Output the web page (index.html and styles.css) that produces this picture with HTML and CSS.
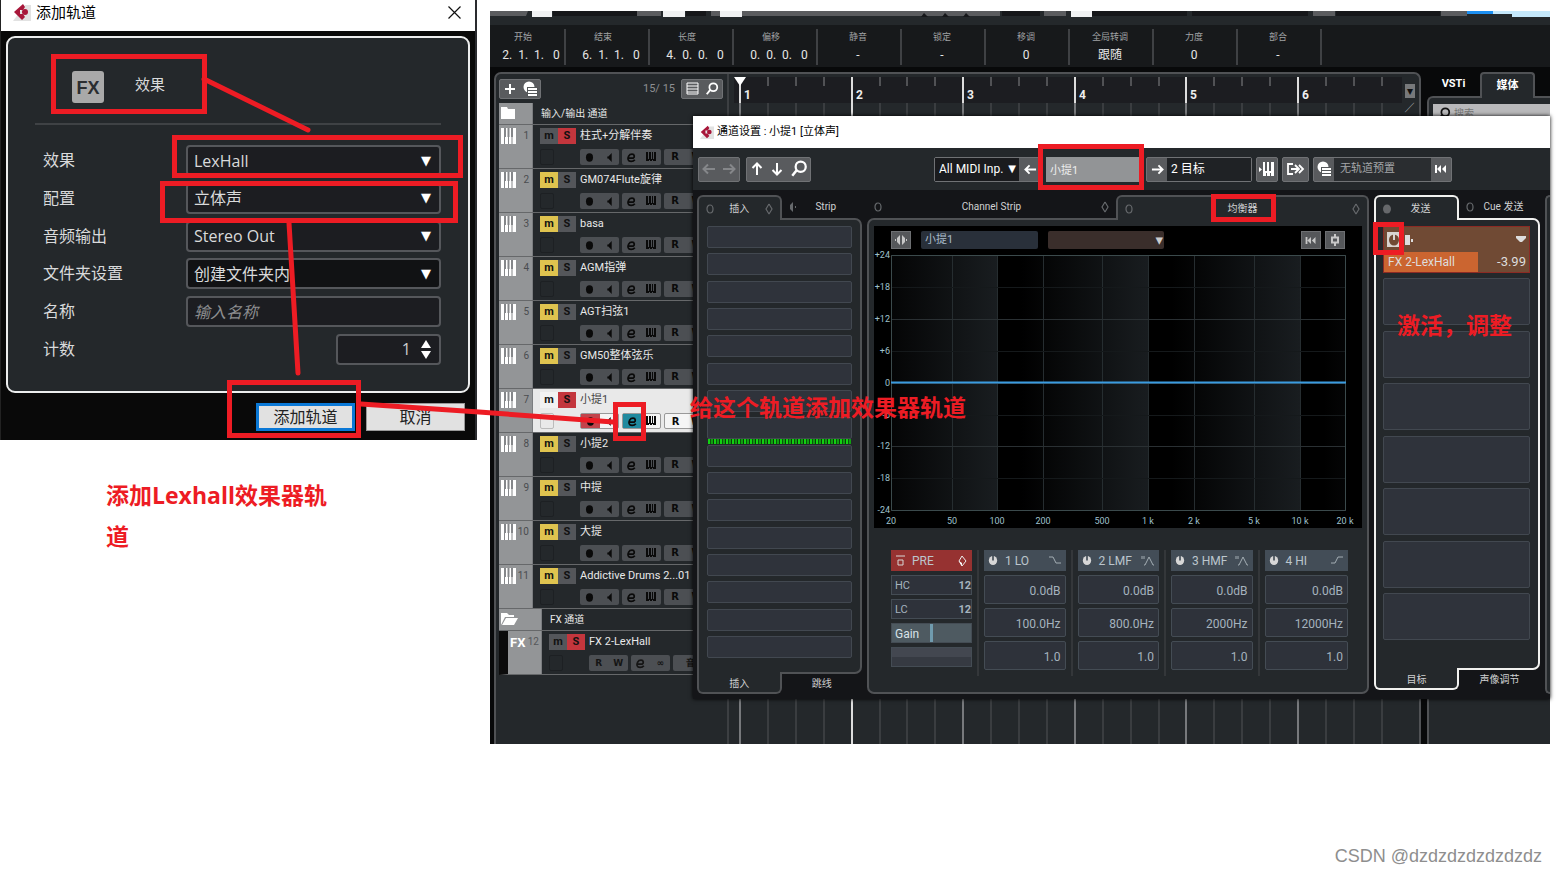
FILE: index.html
```html
<!DOCTYPE html>
<html lang="zh-CN">
<head>
<meta charset="utf-8">
<title>添加轨道</title>
<link rel="stylesheet" href="styles.css">
</head>
<body>
<svg class="defs" aria-hidden="true">
  <symbol id="logo" viewBox="0 0 18 18"><path d="M0 18 12 2h6v16z" fill="#e2e2e2"/><path d="M10 1 1 9l8 8 3-3-2-3-3 0 0-4 3 0 2-3z" fill="#a8173a"/><circle cx="12" cy="9" r="3" fill="#a8173a"/></symbol>
  <symbol id="piano" viewBox="0 0 15 16"><path d="M0 0h15v16H0z" fill="#fff"/><path d="M3 0h2v9h-1v7H3zM6.500 0h2v9h-.5v7H7V9h-.5zM10 0h2v9h-.5v7h-1V9H10z" fill="#85878a"/></symbol>
  <symbol id="keys" viewBox="0 0 10 10"><path d="M0 0h2v7h1V0h2v7h1V0h1v7h1V0h2v9H7V8H6v1H4V8H3v1H0z"/></symbol>
  <symbol id="rec" viewBox="0 0 10 10"><ellipse cx="5" cy="5" rx="3.200" ry="3.800"/></symbol>
  <symbol id="mon" viewBox="0 0 10 10"><path d="M3 4h1l3-3v8L4 6H3z"/></symbol>
  <symbol id="edit" viewBox="0 0 10 10"><path d="M2.500 5.500h4c1.500-.5 1.500-3.500-1-3.500-3 0-4 3-3.500 5 .6 2 4.500 2 6 0" fill="none" stroke="currentColor" stroke-width="1.600"/></symbol>
  <symbol id="mag" viewBox="0 0 16 16"><circle cx="9.500" cy="6" r="4.500" fill="none" stroke="currentColor" stroke-width="2"/><path d="m6 9-4 5" stroke="currentColor" stroke-width="2.200"/></symbol>
  <symbol id="left" viewBox="0 0 14 14"><path d="M13 7H2M6 2.500 1.500 7 6 11.500" fill="none" stroke="currentColor" stroke-width="2"/></symbol>
  <symbol id="preset" viewBox="0 0 16 16"><circle cx="7" cy="6" r="5.500"/><path d="M5 6h11v10H5z" class="cut"/><path d="M6 7h9v2H6zm0 3h9v2H6zm0 3h9v2H6z"/></symbol>
  <symbol id="rew" viewBox="0 0 12 10"><path d="M0 1h2v8H0zM2 5l4-4v8zM7 5l4-4v8z"/></symbol>
  <symbol id="power" viewBox="0 0 12 12"><ellipse cx="6" cy="6" rx="5" ry="5.500"/><path d="M5 0h2v6H5z" class="cut"/></symbol>
  <symbol id="ring" viewBox="0 0 8 10"><ellipse cx="4" cy="5" rx="3" ry="4" fill="none" stroke="currentColor" stroke-width="1.200"/></symbol>
  <symbol id="dia" viewBox="0 0 8 12"><path d="M4 1 1 6l3 5M4 1l3 5-3 5" fill="none" stroke="currentColor" stroke-width="1.200"/></symbol>
</svg>

<main class="desk">
  <section class="app">
    <svg class="strip" viewBox="0 0 1060 6" preserveAspectRatio="none" aria-hidden="true">
      <path fill="#5b5c5f" d="M0 0h38l-2 5H0zM147 0h24v5h-24zM221 0h289v5H221zM554 0h22v5h-22zM823 0h22v5h-22zM951 0h26v5h-26z"/>
      <path fill="#16171a" d="M63 0h84v5H63zM196 0h20v5h-20zM512 0h38v5h-38zM602 0h95v5h-95zM702 0h116v5H702zM846 0h104v5H846z"/>
      <path fill="#16171a" d="M431 6l3-4 4 4zM452 6l3-4 4 4zM473 6l3-4 4 4z"/>
      <path fill="#f1f2f3" d="M42 0h20v6H42zM173 0h22v6h-22zM230 0h22v6h-22zM581 0h21v6h-21z"/>
      <path fill="#1d90f2" d="M977 0h83v3h-83z"/><path fill="#c5e8fb" d="M1003 0h57v3h-57zM1022 3h38v3h-38z"/>
    </svg>
    <div class="info" id="info"></div>
    <div class="workspace">
      <div class="project">
        <div class="tracks">
          <div class="tracks-head">
            <div class="pair"><button aria-label="添加轨道"><svg width="16" height="16"><path d="M7 3h2v4h4v2H9v4H7V9H3V7h4z"/></svg></button><button aria-label="轨道预置"><svg width="16" height="16"><use href="#preset"/></svg></button></div>
            <span class="count">15/ 15</span>
            <div class="pair"><button aria-label="列表"><svg width="13" height="13"><path d="M1 1h11v11H1zM1 4h11M1 7h11M1 10h11" fill="none" stroke="currentColor"/></svg></button><button aria-label="查找"><svg width="14" height="14"><use href="#mag"/></svg></button></div>
          </div>
          <div id="tracklist"></div>
        </div>
        <div class="timeline">
          <svg class="ruler" id="ruler" height="26"></svg>
          <svg class="lanes" id="lanes"></svg>
        </div>
        <div class="project-side"><button aria-label="标尺选项">▾</button><span>╱</span></div>
      </div>
      <aside class="rack">
        <div class="rack-tabs"><button>VSTi</button><button class="on">媒体</button></div>
        <div class="rack-body"><label><svg width="14" height="14"><use href="#mag"/></svg><input aria-label="搜索" placeholder="搜索"></label></div>
      </aside>
    </div>
  </section>

  <section class="channel">
    <header class="titlebar small"><svg width="14" height="14"><use href="#logo"/></svg><h2>通道设置 : 小提1 [立体声]</h2></header>
    <div class="tools">
      <div class="group dim"><button aria-label="后退"><svg width="14" height="14"><use href="#left"/></svg></button><button aria-label="前进"><svg class="flip" width="14" height="14"><use href="#left"/></svg></button></div>
      <div class="group"><button aria-label="上"><svg class="up" width="14" height="14"><use href="#left"/></svg></button><button aria-label="下"><svg class="down" width="14" height="14"><use href="#left"/></svg></button><button class="w24" aria-label="查找"><svg width="18" height="18"><use href="#mag"/></svg></button></div>
      <div class="group routing"><span class="pick midi"><select aria-label="输入"><option>All MIDI Inp.</option></select></span><button class="w24" aria-label="上一个"><svg width="13" height="13"><use href="#left"/></svg></button></div>
      <input class="chan-name" aria-label="通道名称" value="小提1">
      <div class="group gap4"><button aria-label="下一个"><svg class="flip" width="13" height="13"><use href="#left"/></svg></button><span class="box target">2 目标</span></div>
      <div class="group gap4"><button aria-label="键盘"><svg width="16" height="15"><path d="M0 5l3 2.500L0 10zM4 0h2v9h2V0h2v9h2V0h3v14h-3v-3h-1v3H8v-3H7v3H4z"/></svg></button></div>
      <div class="group gap4"><button class="w27" aria-label="输出"><svg width="18" height="12"><path d="M6 1H1v10h5M4 6h8M8 2l4 4-4 4M12 2l4 4-4 4" fill="none" stroke="currentColor" stroke-width="1.800"/></svg></button></div>
      <div class="group gap4"><button aria-label="预置"><svg width="16" height="16"><use href="#preset"/></svg></button><span class="box presetname">无轨道预置</span><button aria-label="重置"><svg width="12" height="10"><use href="#rew"/></svg></button></div>
    </div>
    <div class="panels">
      <section class="panel inserts">
        <div class="tabs"><button class="tab on"><svg width="8" height="10"><use href="#ring"/></svg><span>插入</span><svg width="8" height="12"><use href="#dia"/></svg></button><button class="tab"><svg width="8" height="12"><path d="M4 1v10L1 8V4zM6 5h1v2H6z" fill="currentColor"/></svg><span>Strip</span><i></i></button></div>
        <div class="body slots" id="inserts"></div>
        <div class="tabs foot"><button class="tab on"><span>插入</span></button><button class="tab"><span>跳线</span></button></div>
      </section>

      <section class="panel eq">
        <div class="tabs"><button class="tab"><svg width="8" height="10"><use href="#ring"/></svg><span>Channel Strip</span><svg width="8" height="12"><use href="#dia"/></svg></button><button class="tab on"><svg width="8" height="10"><use href="#ring"/></svg><span>均衡器</span><svg width="8" height="12"><use href="#dia"/></svg></button></div>
        <div class="body">
          <div class="display">
            <div class="display-bar">
              <button aria-label="监听"><svg width="14" height="12"><path d="M6 1v10L3 8V4zM8 1v10l3-3V4zM1 5h1v2H1zM12 5h1v2h-1z"/></svg></button>
              <input aria-label="名称" value="小提1">
              <span class="pick brown"><select aria-label="预置"><option></option></select></span>
              <button class="push" aria-label="重置"><svg width="12" height="9"><use href="#rew"/></svg></button>
              <button aria-label="设置"><svg width="12" height="12"><path d="M6 0v3M6 9v3M3 3.500h6v5H3z" fill="none" stroke="currentColor" stroke-width="2"/></svg></button>
            </div>
            <svg class="curve" id="curve" viewBox="0 0 488 280"></svg>
          </div>
          <div class="bands" id="bands"></div>
        </div>
      </section>

      <section class="panel sends">
        <div class="tabs"><button class="tab on"><svg width="8" height="10"><ellipse cx="4" cy="5" rx="4" ry="4.500" fill="#66686b"/></svg><span>发送</span><i></i></button><button class="tab"><svg width="8" height="10"><use href="#ring"/></svg><span>Cue 发送</span><i></i></button></div>
        <div class="body slots" id="sends">
          <div class="send">
            <div class="send-top"><button aria-label="激活"><svg width="12" height="12"><use href="#power"/></svg></button><svg width="9" height="12"><path d="M0 1h5v10H0zM6 5h2v3H6z"/></svg><svg class="drop" width="10" height="7"><path d="M0 0h10v2L6 6H4L0 2z"/></svg></div>
            <div class="send-row"><span>FX 2-LexHall</span><b>-3.99</b></div>
          </div>
        </div>
        <div class="tabs foot"><button class="tab on"><span>目标</span></button><button class="tab"><span>声像调节</span></button></div>
      </section>
      <div class="edge"></div>
    </div>
  </section>

  <form class="dialog" onsubmit="return false">
    <header class="titlebar"><svg width="18" height="18"><use href="#logo"/></svg><h1>添加轨道</h1><button type="button" aria-label="关闭"><svg width="13" height="13"><path d="M.5.5l12 12M12.500.5l-12 12" stroke="#111" fill="none" stroke-width="1.200"/></svg></button></header>
    <div class="sheet">
      <div class="kind"><b>FX</b><span>效果</span></div>
      <div class="fields">
        <label for="fx">效果</label><span class="pick"><select id="fx"><option>LexHall</option></select></span>
        <label for="cfg">配置</label><span class="pick"><select id="cfg"><option>立体声</option></select></span>
        <label for="out">音频输出</label><span class="pick"><select id="out"><option>Stereo Out</option></select></span>
        <label for="folder">文件夹设置</label><span class="pick deep"><select id="folder"><option>创建文件夹内</option></select></span>
        <label for="name">名称</label><input id="name" placeholder="输入名称">
        <label for="num">计数</label><span class="stepper"><input id="num" type="number" value="1"><svg width="10" height="19"><path d="M5 0l5 8H0zM5 19l5-8H0z"/></svg></span>
      </div>
    </div>
    <footer><button class="primary">添加轨道</button><button type="button">取消</button></footer>
  </form>

  <svg class="marks" width="1550" height="450" aria-hidden="true">
    <g fill="none" stroke="#ed1c24" stroke-width="5">
      <path d="M53.500 56.500h151v55h-151zM174.500 137.500h286v38h-286zM162.500 183.500h293v37h-293zM229.500 382.500h129v53h-129zM615.500 404.500h28v34h-28zM1040.500 146.500h101v41h-101zM1213.500 196.500h60v23h-60zM1375.500 224.500h26v28h-26z"/>
      <path stroke-linecap="round" d="M204 79l104 51M289 223l9 150M361 404l118 8 134 10"/>
    </g>
  </svg>
  <p class="note n1">添加Lexhall效果器轨道</p>
  <p class="note n2">给这个轨道添加效果器轨道</p>
  <p class="note n3">激活，调整</p>
  <p class="credit">CSDN @dzdzdzdzdzdzdz</p>
</main>
<script src="app.js"></script>
</body>
</html>
```

FILE: styles.css
```css
* { box-sizing: border-box; }
body { margin: 0; background: #fff; font: 12px/16px Roboto, "Noto Sans CJK SC", sans-serif; color: #d9dadb; }
button, input, select { font: inherit; color: inherit; border: 0; padding: 0; margin: 0; background: none; min-width: 0; outline: 0; }
select { appearance: none; width: 100%; height: 100%; }
h1, h2, p { margin: 0; font-weight: 400; }
svg { display: block; fill: currentColor; flex: none; }
.defs { position: absolute; width: 0; height: 0; }
.cut { fill: var(--cut, #55585a); }
.flip { transform: scaleX(-1); }
.up { transform: rotate(90deg); }
.down { transform: rotate(-90deg); }
.desk { position: relative; min-height: 100vh; overflow: hidden; }

/* add-track dialog */
.dialog { position: absolute; left: 0; top: 0; width: 477px; height: 440px; display: flex; flex-direction: column; background: #090909; border-right: 2px solid #2a2b2f; border-left: 1px solid #222; font-family: "Open Sans", "Noto Sans CJK SC", sans-serif; font-size: 16px; line-height: 20px; }
.titlebar { display: flex; align-items: center; background: #fff; color: #000; }
.dialog .titlebar { height: 31px; padding: 0 14px 7px 12px; gap: 5px; }
.titlebar h1 { flex: 1; font-size: 15px; }
.sheet { flex: 1; margin: 5px 5px 0; border: 2px solid #eceded; border-radius: 9px; background: #24282b; padding: 17px 27px 26px; display: flex; flex-direction: column; }
.kind { height: 70px; border-bottom: 2px solid #3f4245; display: flex; align-items: center; gap: 31px; padding: 0 0 8px 37px; font-size: 15px; }
.kind b { width: 32px; height: 32px; margin-top: 3px; border-radius: 3px; background: #a9a9a9; color: #2b2d30; font: bold 18px/34px "Liberation Sans", sans-serif; text-align: center; }
.kind span { margin-bottom: 2px; }
.fields { flex: 1; margin-top: 20px; padding-left: 8px; display: grid; grid-template-columns: 143px 1fr; align-content: space-between; align-items: center; }
.fields label { padding-bottom: 1px; }
.fields .pick, .fields > input, .stepper { height: 31px; border: 2px solid #55575b; border-radius: 4px; background: #1c1d21; }
.fields .deep { background: #111214; }
.pick { position: relative; display: block; }
.pick::after { content: "▼"; position: absolute; right: 8px; top: 50%; line-height: 16px; margin-top: -8px; font-family: "DejaVu Sans", sans-serif; font-size: 13px; color: #fff; pointer-events: none; }
.fields select, .fields > input { padding: 0 6px; }
.fields > input { width: 100%; font-style: italic; }
.fields > input::placeholder { color: #8d8e90; }
.stepper { width: 105px; justify-self: end; display: flex; align-items: center; gap: 10px; padding-right: 8px; color: #fff; }
.stepper input { flex: 1; text-align: right; appearance: textfield; color: #ccc; }
.stepper input::-webkit-inner-spin-button { display: none; }
.dialog footer { height: 47px; display: flex; justify-content: flex-end; gap: 11px; padding: 10px 10px 9px; }
.dialog footer button { width: 99px; background: #e1e1e1; color: #222; border: 1px solid #999; }
.dialog footer .primary { border: 3px solid #0a78d6; }

/* project window */
.app { position: absolute; left: 490px; right: 7px; top: 11px; height: 733px; background: #24282b; display: flex; flex-direction: column; overflow: hidden; }
.strip { width: 100%; height: 6px; }
.info { margin-top: 8px; height: 42px; background: #17191b; display: grid; grid-template-columns: 76px repeat(9, 84px); }
.info div { margin: 4px 0 2px; padding-right: 2px; border-right: 2px solid #3f4144; text-align: center; line-height: 18px; color: #e6e6e6; white-space: pre; }
.info div:nth-child(-n+4) { padding-right: 0; padding-left: 8px; }
.info small { display: block; font-size: 9px; line-height: 17px; color: #a0a2a4; }
.info div:nth-child(-n+4) small { margin-left: -16px; }
.workspace { flex: 1; display: flex; background: #08090a; padding: 5px 0 0 4px; gap: 6px; }
.project { flex: 1; display: flex; border: 2px solid #505255; border-bottom: 0; border-radius: 7px 7px 0 0; background: #24282b; }
.tracks { width: 233px; padding-left: 3px; border-right: 2px solid #3c3f42; font-size: 11px; }
.tracks-head { height: 29px; display: flex; align-items: center; padding: 0 4px 0 0; }
.count { flex: 1; text-align: right; padding-right: 6px; color: #8d8f92; }
.pair { display: flex; height: 20px; border-radius: 2px; background: #595b5e; border: 1px solid #707275; color: #fff; }
.pair button { width: 20px; display: grid; place-items: center; }
.folder, .track { display: flex; border-bottom: 1px solid #66686a; }
.folder { height: 22px; align-items: stretch; color: #e8e8e8; }
.folder span { padding: 3px 8px; font-size: 10px; }
.hue { width: 34px; flex: none; background: #939597; border-right: 1px solid #7b7d80; color: #4a4c4f; display: flex; justify-content: space-between; padding: 3px 3px 0 2px; font-size: 10px; }
.hue svg { color: #fff; }
.track { height: 44px; }
.t-main { flex: 1; padding: 3px 6px 0 7px; }
.t-row { display: flex; align-items: center; height: 16px; white-space: nowrap; color: #e9e9e9; }
.ms { width: 18px; height: 16px; background: #54565a; color: #111; font: bold 11px/14px Roboto, sans-serif; }
.ms.m { background: #dfc34f; }
.ms.s { background: #c3363d; }
.ms.off { background: #54565a; }
.t-name { padding-left: 4px; }
.t-row.low { margin-top: 5px; gap: 3px; color: #0a0a0a; }
.arm { width: 14px; height: 16px; border: 1px solid #1d2023; border-radius: 2px; margin-right: 23px; }
.duo { width: 39px; height: 16px; border-radius: 2px; background: #4c4f53; display: flex; }
.duo:nth-child(4) { width: 44px; }
.duo button { flex: 1; display: grid; place-items: center; font: bold 10px/16px "DejaVu Sans", sans-serif; }
.track.sel .t-main { background: #e9e9e9; }
.track.sel .t-name { color: #444; }
.sel .duo { background: #f5f5f5; border: 1px solid #999; }
.sel .arm { border-color: #bbb; }
.sel .ms.m { background: #f2f2f2; }
.sel .armed { background: #c2444b; }
.sel .editing { background: #218a9f; }
.track.fx { border-left: 9px solid #0b0b0b; }
.fx .duo { color: #151515; }
.fx .duo button { font-size: 9px; }
.fx .hue { color: #fff; padding-right: 2px; }
.fx .hue b { font: bold 13px/18px Roboto, sans-serif; }
.fx .hue span { color: #55575a; }
.folder.fxf .hue { width: 43px; }
.timeline { flex: 1; padding: 3px 0 0 5px; display: flex; flex-direction: column; }
.ruler { width: 100%; background: #1c1d21; }
.ruler text { font: bold 12px Roboto, sans-serif; fill: #eee; }
.lanes { width: 100%; flex: 1; }
.project-side { width: 17px; padding: 9px 3px; }
.project-side button { width: 10px; height: 14px; background: #77797b; color: #111; line-height: 14px; }
.project-side span { font-size: 9px; }
.rack { width: 123px; display: flex; flex-direction: column; }
.rack-tabs { display: flex; height: 24px; color: #fff; font-weight: bold; font-size: 11px; }
.rack-tabs button { width: 53px; }
.rack-tabs .on { width: 55px; position: relative; height: 26px; border: 2px solid #505255; border-bottom: 0; border-radius: 4px 4px 0 0; background: #24282b; }
.rack-body { flex: 1; border: solid #505255; border-width: 2px 0 0 2px; border-radius: 6px 0 0; background: #24282b; padding: 6px 0 0 4px; }
.rack-body label { display: flex; align-items: center; gap: 3px; height: 20px; padding-left: 4px; background: #b9b9bb; color: #111; font-size: 10px; }

/* channel settings window */
.channel { position: absolute; left: 693px; right: 7px; top: 116px; height: 583px; display: flex; flex-direction: column; background: #141518; box-shadow: 0 0 4px #000; }
.titlebar.small { height: 32px; padding-left: 7px; gap: 3px; }
.titlebar h2 { font-size: 11px; }
.tools { height: 42px; padding: 0 98px 0 5px; display: flex; align-items: center; background: #24282b; }
.group { display: flex; height: 25px; border: 1px solid #707275; border-radius: 2px; background: #595b5e; color: #fff; margin-right: 6px; }
.group button { width: 20px; display: grid; place-items: center; }
.group.dim { color: #85878a; }
.group .w24 { width: 23px; }
.group .w27 { width: 25px; }
.group.routing { margin: 0 3px 0 auto; }
.midi { width: 84px; background: #1a1b1e; }
.midi select { padding-left: 4px; }
.midi::after { right: 3px; font-size: 10px; }
.chan-name { width: 93px; height: 25px; padding-left: 4px; margin-right: 7px; background: #929496; color: #eee; font-size: 11px; }
.box { background: #1f2225; padding: 3px 4px; }
.target { width: 84px; }
.presetname { width: 97px; color: #a5a7a9; background: #2a2d30; padding-left: 6px; font-size: 11px; }
.group.gap4 { margin-right: 4px; }
.group.gap4:last-child { margin-right: 0; }
.panels { flex: 1; display: flex; padding: 5px 0; gap: 5px; --line: #505255; }
.panel { display: flex; flex-direction: column; color: #d0d1d2; }
.inserts { width: 165px; margin-left: 4px; }
.eq { flex: 1; }
.sends { width: 166px; margin-bottom: 4px; --line: #f1f1ef; }
.tabs { display: flex; height: 23px; font-size: 10px; }
.tab { flex: 1; display: flex; align-items: center; justify-content: space-between; padding: 0 7px; }
.tab svg { color: #66696c; }
.tab.on { position: relative; height: 25px; border: 2px solid var(--line); border-bottom: 0; border-radius: 6px 6px 0 0; background: #24282b; }
.body { flex: 1; border: 2px solid var(--line); background: #24282b; border-radius: 0 7px 7px 0; }
.eq .body { border-radius: 7px 0 7px 7px; padding: 6px 5px; }
.foot { height: 20px; }
.foot .tab { justify-content: center; }
.foot .tab.on { height: 22px; margin-top: -2px; padding-top: 4px; border: 2px solid var(--line); border-top: 0; border-radius: 0 0 6px 6px; }
.slots { display: flex; flex-direction: column; justify-content: space-between; padding: 6px 8px 14px; }
.slot { height: 22px; background: #2f333b; border: 1px solid #424850; border-radius: 2px; }
.slot.tall { height: 47px; }
.meter { position: relative; }
.meter::before { content: ""; position: absolute; left: 0; right: 0; top: -7px; height: 5px; background: repeating-linear-gradient(90deg, #12d212 0 2px, #0a560a 2px 3px, #10a010 3px 5px, #083d08 5px 6px); }
.sends .slots { padding: 6px 8px 28px 7px; }
.send { height: 47px; background: #704a34; border: 1px solid #8c2b24; display: flex; flex-direction: column; color: #ddd; }
.send-top { flex: 1; display: flex; align-items: center; gap: 5px; padding: 0 3px; }
.send-top button { width: 13px; height: 15px; background: #d8d4d0; color: #704a34; display: grid; place-items: center; --cut: #d8d4d0; }
.send-top .drop { margin-left: auto; }
.send-row { display: flex; justify-content: space-between; height: 20px; line-height: 20px; }
.send-row span { width: 94px; padding-left: 4px; background: #cb6530; }
.send-row b { font-weight: 400; padding-right: 3px; font-size: 13px; }
.edge { width: 5px; border: 2px solid var(--line); border-right: 0; border-radius: 6px 0 0 6px; background: #24282b; }

.display { background: #000; height: 302px; padding-top: 5px; }
.display-bar { height: 18px; padding: 0 17px; display: flex; gap: 4px; }
.display-bar button { width: 20px; background: #55575a; border: 1px solid #6d6f72; display: grid; place-items: center; color: #c7c7c7; }
.display-bar input { width: 117px; margin: 0 6px; padding-left: 4px; border-radius: 2px; background: #29303a; color: #a9bccb; font-size: 11px; }
.brown { width: 116px; border-radius: 2px; background: #3a2e2b; }
.brown::after { content: "▾"; right: 1px; font-size: 15px; color: #ccc; }
.display-bar .push { margin-left: auto; }
.curve { width: 100%; }
.curve text { font: 9px Roboto, sans-serif; fill: #9fc0cc; }
.bands { display: grid; grid-template-columns: 88px repeat(4, 1fr); padding: 22px 9px 0 17px; }
.band { display: flex; flex-direction: column; gap: 4px; padding-right: 5px; height: 126px; border-right: 2px solid #34373a; color: #a5b3be; }
.band + .band { padding: 0 5px 0 5px; }
.band:last-child { border: 0; }
.band header { height: 21px; padding: 0 4px; background: #434d57; display: flex; align-items: center; gap: 7px; color: #bcc6cd; white-space: nowrap; --cut: #434d57; }
.band header svg:first-child { color: #d7d7d7; }
.band header svg:last-child { margin-left: auto; color: #a3adb3; }
.val { height: 29px; border: 1px solid #444c54; border-radius: 2px; background: #2e323a; text-align: right; padding: 3px 4px 0; width: 100%; }
.pre header { background: #963231; padding: 0 5px; }
.pre div { height: 20px; border: 1px solid #444c54; background: #2e323a; display: flex; justify-content: space-between; padding: 2px 0 0 3px; font-size: 11px; }
.pre .gain { background: linear-gradient(90deg, #4e5a61 48%, #709bae 48% 52%, #4e5a61 52%); color: #d8e2e8; font-size: 12px; }
.pre .blank { background: linear-gradient(#434750 50%, #363a42 50%); }

/* annotations */
.marks { position: absolute; left: 0; top: 0; pointer-events: none; }
.note { position: absolute; color: #ed1c24; font: bold 23px/41px "Open Sans", "Noto Sans CJK SC", sans-serif; }
.n1 { left: 106px; top: 475px; width: 232px; }
.n2 { left: 690px; top: 387px; }
.n3 { left: 1397px; top: 305px; }
.credit { position: absolute; right: 15px; top: 845px; font: 18px/22px "Liberation Sans", sans-serif; color: #8e8e8e; }
```

FILE: app.js
```js
const el = id => document.getElementById(id);
const icon = (n, w = 11, h = 11) => `<svg width="${w}" height="${h}"><use href="#${n}"/></svg>`;

el('info').innerHTML = [['开始', '2.  1.  1.   0'], ['结束', '6.  1.  1.   0'], ['长度', '4.  0.  0.   0'], ['偏移', '0.  0.  0.   0'],
  ['静音', '-'], ['锁定', '-'], ['移调', '0'], ['全局转调', '跟随'], ['力度', '0'], ['部合', '-']]
  .map(([a, b]) => `<div><small>${a}</small>${b}</div>`).join('');

const names = ['柱式+分解伴奏', 'GM074Flute旋律', 'basa', 'AGM指弹', 'AGT扫弦1', 'GM50整体弦乐', '小提1', '小提2', '中提', '大提', 'Addictive Drums 2...01'];
const head = (m, s, n) => `<div class="t-row"><button class="ms ${m}">m</button><button class="ms ${s}">S</button><span class="t-name">${n}</span></div>`;
const track = (n, i) => `<div class="track ${i === 6 ? 'sel' : ''}"><div class="hue">${icon('piano', 15, 16)}<span>${i + 1}</span></div><div class="t-main">
  ${head(i === 0 ? 'off' : 'm', i === 0 || i === 6 ? 's' : '', n)}
  <div class="t-row low"><span class="arm"></span><span class="duo"><button class="armed" aria-label="录音">${icon('rec')}</button><button aria-label="监听">${icon('mon')}</button></span>
  <span class="duo"><button class="editing" aria-label="编辑">${icon('edit')}</button><button aria-label="乐器">${icon('keys', 10, 10)}</button></span>
  <span class="duo"><button>R</button><button>W</button></span></div></div></div>`;
el('tracklist').innerHTML =
  `<div class="folder"><div class="hue"><svg width="14" height="14"><path d="M0 3V1h6l1 2h7v10H0z"/></svg></div><span>输入/输出 通道</span></div>` +
  names.map(track).join('') +
  `<div class="folder fxf"><div class="hue"><svg width="17" height="14"><path d="M0 13V1h6l2 2h5v2H4zM5 6h12l-4 7H1z"/></svg></div><span>FX 通道</span></div>
  <div class="track fx"><div class="hue"><b>FX</b><span>12</span></div><div class="t-main">${head('off', 's', 'FX 2-LexHall')}
  <div class="t-row low"><span class="arm"></span><span class="duo"><button>R</button><button>W</button></span><span class="duo"><button aria-label="编辑">${icon('edit')}</button><button>∞</button></span><span class="duo"><button>音量</button></span></div></div></div>`;

let ticks = '', lanes = '';
for (let i = 0; i < 24; i++) {
  const x = Math.round(6 + i * 27.9), bar = i % 4 === 0;
  ticks += `<path d="M${x} 0v${bar ? 26 : 9}" stroke="${bar ? '#ddd' : '#85878a'}" stroke-width="${bar ? 2 : 1}"/>`;
  if (bar) ticks += `<text x="${x + 4}" y="22">${i / 4 + 1}</text>`;
  lanes += `<path d="M${x} 0v700" stroke="${i === 4 ? '#ddd' : bar ? '#77797c' : '#505357'}" stroke-width="${bar ? 2 : 1}"/>`;
}
el('ruler').innerHTML = ticks + '<path d="M0 0h12l-6 9z" fill="#fff"/>';
el('lanes').innerHTML = lanes;

el('inserts').innerHTML = Array.from({ length: 16 }, (_, i) => `<div class="slot ${i === 8 ? 'meter' : ''}"></div>`).join('');
el('sends').insertAdjacentHTML('beforeend', '<div class="slot tall"></div>'.repeat(7));

/* frequency response: plot area 17..472 by 6..261 */
let c = '<defs><linearGradient id="g" gradientUnits="userSpaceOnUse" x1="0" x2="152"><stop offset="0.15" stop-color="#000"/><stop offset="1" stop-color="#191d20"/></linearGradient></defs>';
[[-28, 45, 107], [124, 0, 151], [275, 0, 152], [427, 0, 45]].forEach(([o, x, w]) => { c += `<rect transform="translate(${o} 0)" x="${x}" y="6" width="${w}" height="255" fill="url(#g)"/>`; });
[['20', 17], ['50', 78], ['100', 123], ['200', 169], ['500', 228], ['1 k', 274], ['2 k', 320], ['5 k', 380], ['10 k', 426], ['20 k', 471]].forEach(([t, x]) => {
  c += `<path d="M${x + .5} 6v255" stroke="#262d30"/><text x="${x}" y="275" text-anchor="middle">${t}</text>`;
});
['+24', '+18', '+12', '+6', '0', '-6', '-12', '-18', '-24'].forEach((t, i) => {
  const y = 6 + Math.round(i * 31.9);
  c += `<path d="M17 ${y + .5}h455" stroke="${i % 2 ? '#15191b' : '#2a3033'}"/><text x="16" y="${y + 3}" text-anchor="end">${t}</text>`;
});
c += '<path d="M17.500 6.500h454v255h-454z" fill="none" stroke="#3b4a4c"/><path d="M17 133.500h455" stroke="#3a9be0" stroke-width="2"/>';
el('curve').innerHTML = c;

const shapes = ['M1 2h4l3 6h5', 'M1 1v3M3 1v3M3 10h1l4-8 4 8h1', 'M1 1v3M3 1v3M3 10h1l4-8 4 8h1', 'M1 8h4l3-6h5'];
el('bands').innerHTML = `<div class="band pre"><header><svg width="9" height="11"><path d="M0 1h9M2 5h5v5H2z" fill="none" stroke="currentColor"/></svg>PRE<svg width="9" height="12">
  <path d="M4 1l4 5-4 5-3-5z" fill="none" stroke="#eee"/><path d="M1 6l3 5V8z" fill="#fff"/></svg></header><div><span>HC</span><b>12</b></div><div><span>LC</span><b>12</b></div><div class="gain">Gain</div><div class="blank"></div></div>` +
  [['1 LO', '100.0Hz'], ['2 LMF', '800.0Hz'], ['3 HMF', '2000Hz'], ['4 HI', '12000Hz']].map(([n, f], i) =>
    `<div class="band"><header>${icon('power', 10, 11)}${n}<svg width="14" height="11"><path d="${shapes[i]}" fill="none" stroke="currentColor"/></svg></header>
    ${['0.0dB', f, '1.0'].map((v, k) => `<input class="val" aria-label="${n} ${['增益', '频率', 'Q'][k]}" value="${v}">`).join('')}</div>`).join('');
```
